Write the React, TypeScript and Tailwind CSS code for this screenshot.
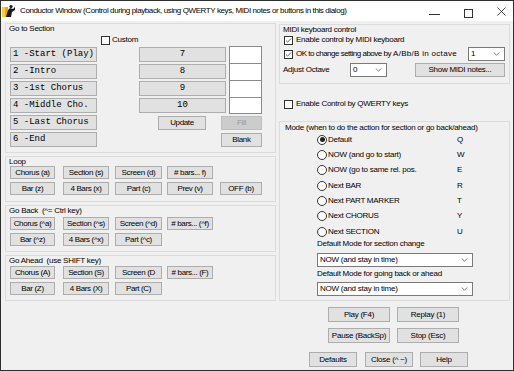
import React from 'react'

const UI = "font-['Liberation_Sans',Arial,sans-serif] text-[8px] tracking-[-0.25px]"
const MONO = "font-['Liberation_Mono','Courier_New',monospace] text-[9px] tracking-normal"
const SMALL = 'text-[8px] tracking-[-0.35px]'

const SECTIONS = ['1 -Start (Play)', '2 -Intro', '3 -1st Chorus', '4 -Middle Cho.', '5 -Last Chorus', '6 -End']
const NUMBERS = ['7', '8', '9', '10']

// margin-left / width of each button column in the small button groups
const COL_ML = ['ml-0', 'ml-[8px]', 'ml-[6px]', 'ml-[5px]', 'ml-[7px]']
const COL_W = ['w-[45px]', 'w-[46px]', 'w-[47px]', 'w-[46px]', 'w-[42px]']

const MODES = [
  ['Default', 'Q'],
  ['NOW (and go to start)', 'W'],
  ['NOW (go to same rel. pos.', 'E'],
  ['Next BAR', 'R'],
  ['Next PART MARKER', 'T'],
  ['Next CHORUS', 'Y'],
  ['Next SECTION', 'U'],
]

function Btn({
  children,
  className = '',
  disabled = false,
}: {
  children: React.ReactNode
  className?: string
  disabled?: boolean
}) {
  return (
    <button
      type="button"
      className={`flex items-center justify-center border shrink-0 leading-none whitespace-nowrap ${
        disabled ? 'bg-[#cccccc] border-[#bfbfbf] text-[#9a9a9a]' : 'bg-[#e1e1e1] border-[#adadad] text-black'
      } ${className}`}
    >
      {children}
    </button>
  )
}

function Check({ checked = false }: { checked?: boolean }) {
  return (
    <span className="w-[9px] h-[9px] border border-[#333333] bg-white flex items-center justify-center shrink-0">
      {checked && (
        <svg viewBox="0 0 9 9" className="w-[9px] h-[9px]">
          <path d="M1.3 4.6L3.4 6.6L7.6 2.1" fill="none" stroke="#222" strokeWidth="0.9" />
        </svg>
      )}
    </span>
  )
}

function Radio({ on = false }: { on?: boolean }) {
  return (
    <span className="w-[10px] h-[10px] rounded-full border border-[#333333] bg-white flex items-center justify-center shrink-0">
      {on && <span className="w-[5px] h-[5px] rounded-full bg-[#222222]" />}
    </span>
  )
}

function Chevron() {
  return (
    <svg viewBox="0 0 8 5" className="w-[7px] h-[4px] shrink-0">
      <polyline points="0.5,0.5 4,4 7.5,0.5" fill="none" stroke="#606060" strokeWidth="1" />
    </svg>
  )
}

function Select({ value, className = '' }: { value: string; className?: string }) {
  return (
    <div className={`bg-white border border-[#7a7a7a] flex items-center pl-[2px] pr-[4px] shrink-0 ${className}`}>
      <span className="flex-1 truncate leading-none">{value}</span>
      <Chevron />
    </div>
  )
}

function ButtonRow({ labels }: { labels: string[] }) {
  return (
    <div className="flex h-[13px]">
      {labels.map((l, i) => (
        <Btn key={l} className={`h-[13px] ${SMALL} ${COL_ML[i]} ${COL_W[i]}`}>
          {l}
        </Btn>
      ))}
    </div>
  )
}

function AppIcon() {
  return (
    <svg viewBox="0 0 14 14" className="w-[14px] h-[14px] ml-[1px] shrink-0">
      <rect x="0" y="3" width="6" height="10" fill="#f2a41c" />
      <rect x="0" y="3" width="3" height="10" fill="#f7cf3d" />
      <path d="M4 13 L6 6 L8 4 L11 5 L13 3 L13 6 L10 8 L9 13 Z" fill="#1a1a1a" />
      <circle cx="9" cy="2.5" r="1.6" fill="#1a1a1a" />
    </svg>
  )
}

export default function App() {
  return (
    <div className={`w-[514px] h-[371px] border border-[#2e2e2e] bg-[#f0f0f0] flex flex-col overflow-hidden text-black ${UI}`}>
      {/* Title bar */}
      <div className="h-[20px] bg-white flex items-center shrink-0">
        <AppIcon />
        <span className="ml-[4px] text-[8px] tracking-[-0.4px] leading-[12px] whitespace-nowrap">
          Conductor Window (Control during playback, using QWERTY keys, MIDI notes or buttons in this dialog)
        </span>
        <div className="ml-auto flex items-center h-full">
          <span className="w-[11px] h-px bg-[#333333] mt-[7px]" />
          <span className="w-[9px] h-[9px] border border-[#333333] ml-[24px] mt-[4px]" />
          <svg viewBox="0 0 9 9" className="w-[9px] h-[9px] ml-[24px] mr-[7px]">
            <path d="M0.5 0.5L8.5 8.5M8.5 0.5L0.5 8.5" stroke="#333" strokeWidth="0.9" />
          </svg>
        </div>
      </div>

      {/* Body */}
      <div className="flex pl-[4px] pt-[2px] gap-[3px]">
        {/* Left column */}
        <div className="w-[271px] flex flex-col gap-[3px] shrink-0">
          {/* Go to Section */}
          <div className="h-[130px] border border-[#dcdcdc] pl-[3px] flex flex-col">
            <div className="h-[10px] leading-[10px]">Go to Section</div>
            <div className="h-[12px] flex items-center ml-[92px] gap-[2px]">
              <Check />
              <span className="leading-none">Custom</span>
            </div>
            {SECTIONS.slice(0, 4).map((s, i) => (
              <div key={s} className="h-[17px] flex items-center ml-[1px]">
                <Btn className={`w-[87px] h-[15px] !justify-start pl-[2px] ${MONO}`}>{s}</Btn>
                <Btn className={`w-[87px] h-[15px] ml-[42px] ${MONO}`}>{NUMBERS[i]}</Btn>
                <div
                  className={`w-[33px] h-[17px] ml-[3px] bg-white border-x border-t border-[#8a8a8a] ${
                    i === 3 ? 'border-b' : ''
                  }`}
                />
              </div>
            ))}
            <div className="h-[17px] flex items-center ml-[1px]">
              <Btn className={`w-[87px] h-[15px] !justify-start pl-[2px] ${MONO}`}>{SECTIONS[4]}</Btn>
              <Btn className={`w-[48px] h-[14px] ml-[61px] ${SMALL}`}>Update</Btn>
              <Btn disabled className={`w-[41px] h-[14px] ml-[15px] ${SMALL}`}>
                Fill
              </Btn>
            </div>
            <div className="h-[17px] flex items-center ml-[1px]">
              <Btn className={`w-[87px] h-[15px] !justify-start pl-[2px] ${MONO}`}>{SECTIONS[5]}</Btn>
              <Btn className={`w-[41px] h-[14px] ml-[124px] ${SMALL}`}>Blank</Btn>
            </div>
          </div>

          {/* Loop */}
          <div className="h-[46px] border border-[#dcdcdc] pl-[4px] flex flex-col">
            <div className="h-[9px] leading-[9px] -ml-[1px]">Loop</div>
            <div className="flex flex-col gap-[3px]">
              <ButtonRow labels={['Chorus (a)', 'Section (s)', 'Screen (d)', '# bars... f)']} />
              <ButtonRow labels={['Bar (z)', '4 Bars (x)', 'Part (c)', 'Prev (v)', 'OFF (b)']} />
            </div>
          </div>

          {/* Go Back */}
          <div className="h-[47px] border border-[#dcdcdc] pl-[4px] flex flex-col">
            <div className="h-[11px] leading-[10px] -ml-[1px] whitespace-pre">Go Back  (^= Ctrl key)</div>
            <div className="flex flex-col gap-[3px]">
              <ButtonRow labels={['Chorus (^a)', 'Section (^s)', 'Screen (^d)', '# bars... (^f)']} />
              <ButtonRow labels={['Bar (^z)', '4 Bars (^x)', 'Part (^c)']} />
            </div>
          </div>

          {/* Go Ahead */}
          <div className="h-[46px] border border-[#dcdcdc] pl-[4px] flex flex-col">
            <div className="h-[10px] leading-[10px] -ml-[1px] whitespace-pre">Go Ahead  (use SHIFT key)</div>
            <div className="flex flex-col gap-[3px]">
              <ButtonRow labels={['Chorus (A)', 'Section (S)', 'Screen (D', '# bars... (F)']} />
              <ButtonRow labels={['Bar (Z)', '4 Bars (X)', 'Part (C)']} />
            </div>
          </div>
        </div>

        {/* Right column */}
        <div className="w-[231px] flex flex-col mt-[1px] shrink-0">
          {/* MIDI keyboard control */}
          <div className="h-[60px] border border-[#dcdcdc] pl-[3px] flex flex-col">
            <div className="h-[9px] leading-[9px]">MIDI keyboard control</div>
            <div className="h-[12px] flex items-center gap-[3px] ml-[1px]">
              <Check checked />
              <span className="leading-none">Enable control by MIDI keyboard</span>
            </div>
            <div className="h-[16px] flex items-center ml-[1px]">
              <Check checked />
              <span className="w-[97px] ml-[3px] leading-none whitespace-nowrap tracking-[-0.5px]">
                OK to change setting above by
              </span>
              <span className="w-[75px] leading-none whitespace-nowrap tracking-[0.3px]">A/Bb/B in octave</span>
              <Select value="1" className="w-[37px] h-[14px]" />
            </div>
            <div className="h-[16px] flex items-center">
              <span className="w-[67px] leading-none">Adjust Octave</span>
              <Select value="0" className="w-[37px] h-[14px]" />
              <Btn className="w-[90px] h-[14px] ml-[28px]">Show MIDI notes...</Btn>
            </div>
          </div>

          <div className="h-[12px] mt-[14px] flex items-center gap-[3px] ml-[5px]">
            <Check />
            <span className="leading-none">Enable Control by QWERTY keys</span>
          </div>

          {/* Mode */}
          <div className="h-[180px] mt-[11px] border border-[#dcdcdc] pl-[5px] flex flex-col">
            <div className="h-[9px] mt-[1px] leading-[9px] whitespace-nowrap">
              Mode (when to do the action for section or go back/ahead)
            </div>
            {MODES.map(([label, key], i) => (
              <div key={key} className="h-[15.33px] flex items-center ml-[32px]">
                <Radio on={i === 0} />
                <span className="w-[129px] ml-[1px] leading-none whitespace-nowrap">{label}</span>
                <span className="leading-none">{key}</span>
              </div>
            ))}
            <div className="h-[9px] leading-[9px] ml-[32px]">Default Mode for section change</div>
            <Select value="NOW (and stay in time)" className="w-[156px] h-[14px] mt-[5px] ml-[32px]" />
            <div className="h-[9px] leading-[9px] mt-[2px] ml-[32px]">Default Mode for going back or ahead</div>
            <Select value="NOW (and stay in time)" className="w-[156px] h-[14px] mt-[4px] ml-[32px]" />
          </div>

          {/* Transport buttons */}
          <div className="flex mt-[6px] ml-[49px]">
            <Btn className="w-[62px] h-[15px]">Play (F4)</Btn>
            <Btn className="w-[62px] h-[15px] ml-[7px]">Replay (1)</Btn>
          </div>
          <div className="flex mt-[6px] ml-[49px]">
            <Btn className="w-[62px] h-[15px]">Pause (BackSp)</Btn>
            <Btn className="w-[62px] h-[15px] ml-[7px]">Stop (Esc)</Btn>
          </div>
          <div className="flex mt-[9px] ml-[30px]">
            <Btn className="w-[48px] h-[15px]">Defaults</Btn>
            <Btn className="w-[48px] h-[15px] ml-[8px]">Close (^ ~)</Btn>
            <Btn className="w-[48px] h-[15px] ml-[7px]">Help</Btn>
          </div>
        </div>
      </div>
    </div>
  )
}
